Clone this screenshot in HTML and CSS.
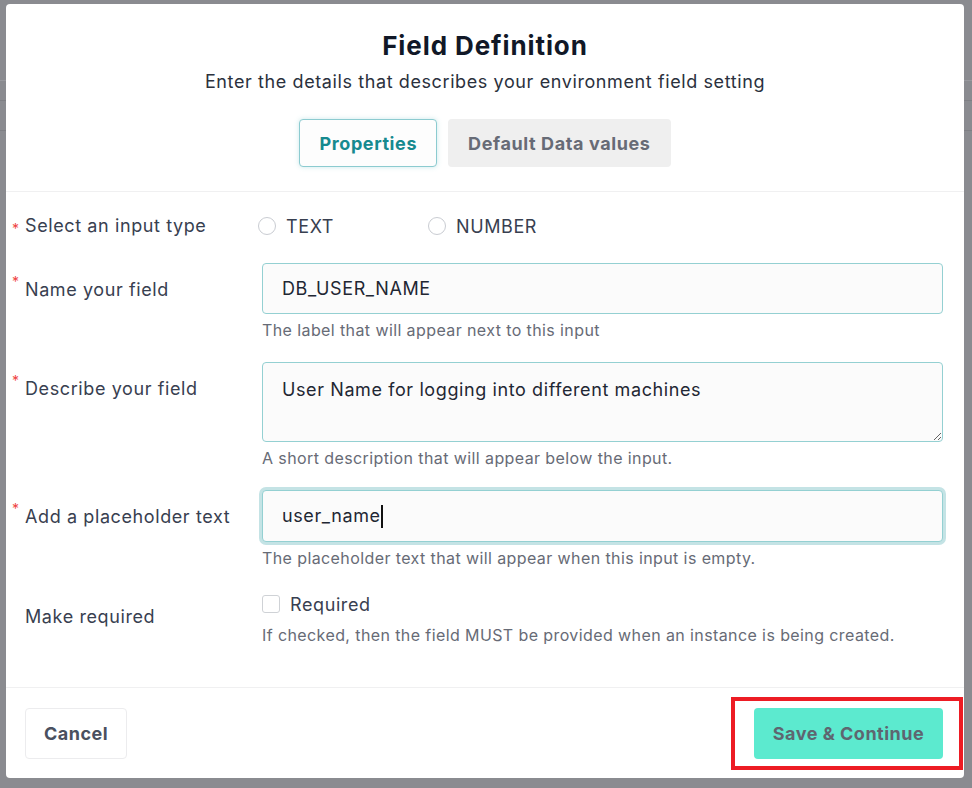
FILE: index.html
```html
<!DOCTYPE html>
<html lang="en">
<head>
<meta charset="utf-8">
<title>Field Definition</title>
<link rel="stylesheet" href="styles.css">
</head>
<body>
<div class="modal">
  <header class="modal-head">
    <h1 class="title">Field Definition</h1>
    <p class="subtitle">Enter the details that describes your environment field setting</p>
    <div class="tabs">
      <button class="tab tab-active">Properties</button>
      <button class="tab tab-idle">Default Data values</button>
    </div>
  </header>

  <section class="modal-body">
    <div class="row row-center">
      <div class="label label-center"><span class="req req-mid">*</span>Select an input type</div>
      <div class="radios">
        <label class="radio"><span class="circle"></span>TEXT</label>
        <label class="radio"><span class="circle"></span>NUMBER</label>
      </div>
    </div>

    <div class="row">
      <div class="label"><span class="req">*</span>Name your field</div>
      <div class="field">
        <input class="input" type="text" value="DB_USER_NAME">
        <div class="help">The label that will appear next to this input</div>
      </div>
    </div>

    <div class="row">
      <div class="label"><span class="req">*</span>Describe your field</div>
      <div class="field">
        <textarea class="input textarea">User Name for logging into different machines</textarea>
        <div class="help">A short description that will appear below the input.</div>
      </div>
    </div>

    <div class="row">
      <div class="label"><span class="req">*</span>Add a placeholder text</div>
      <div class="field">
        <div class="input input-focus">user_name<span class="caret"></span></div>
        <div class="help">The placeholder text that will appear when this input is empty.</div>
      </div>
    </div>

    <div class="row">
      <div class="label"><span class="req req-none"></span>Make required</div>
      <div class="field">
        <label class="check"><span class="box"></span>Required</label>
        <div class="help help-check">If checked, then the field MUST be provided when an instance is being created.</div>
      </div>
    </div>
  </section>

  <footer class="modal-foot">
    <button class="btn btn-cancel">Cancel</button>
    <button class="btn btn-save">Save &amp; Continue</button>
    <span class="annot"></span>
  </footer>
</div>
</body>
</html>
```

FILE: styles.css
```css
* { box-sizing: border-box; }

html, body { margin: 0; padding: 0; }

body {
  width: 972px;
  height: 788px;
  overflow: hidden;
  padding-top: 4px;
  font-family: Inter, "Noto Sans", sans-serif;
  background:
    linear-gradient(#98999e, #98999e) 0 80px / 100% 1px no-repeat,
    linear-gradient(#7e7f84, #7e7f84) 0 100px / 100% 1px no-repeat,
    linear-gradient(#7e7f84, #7e7f84) 0 130px / 100% 1px no-repeat,
    #8a8b90;
}

.modal {
  width: 958px;
  margin-left: 6px;
  background: #fff;
  border-radius: 4px;
  position: relative;
}

.modal-head {
  padding: 26px 0 24px;
  text-align: center;
  border-bottom: 1px solid #f0f0f1;
}

.title {
  margin: 0;
  font-size: 26px;
  line-height: 32px;
  font-weight: 700;
  letter-spacing: 0.9px;
  color: #111827;
}

.subtitle {
  margin: 8px 0 0;
  font-size: 18px;
  line-height: 24px;
  letter-spacing: 0.6px;
  color: #2b313d;
}

.tabs {
  margin-top: 25px;
  display: flex;
  justify-content: center;
  gap: 11px;
}

.tab {
  height: 48px;
  padding: 0 19px;
  font-family: inherit;
  font-size: 18px;
  font-weight: 700;
  letter-spacing: 0.6px;
  border-radius: 4px;
  border: 1px solid transparent;
}

.tab-active {
  background: #fdfdfd;
  border-color: #8ccbd0;
  color: #168a8f;
  box-shadow: 0 0 5px rgba(140, 203, 208, 0.45);
}

.tab-idle {
  background: #efefef;
  color: #676b76;
}

.modal-body {
  padding: 22px 21px 42px 19px;
  display: flex;
  flex-direction: column;
  gap: 22px;
}

.row {
  display: grid;
  grid-template-columns: 237px 1fr;
}

.row-center {
  align-items: center;
  margin-bottom: 3px;
}

.label {
  display: flex;
  align-items: flex-start;
  padding-top: 15px;
  font-size: 18px;
  line-height: 24px;
  letter-spacing: 0.6px;
  color: #384050;
  margin-left: -14px;
}

.label-center {
  padding-top: 0;
  align-items: center;
}

.req {
  width: 14px;
  flex: none;
  padding-left: 1px;
  margin-top: -3px;
  font-size: 14px;
  line-height: 14px;
  letter-spacing: 0;
  color: #ef4444;
}

.req-mid {
  margin-top: 6px;
}

.radios {
  display: flex;
  margin-left: -4px;
  height: 24px;
}

.radio {
  width: 170px;
  display: flex;
  align-items: center;
  gap: 10px;
  font-size: 18px;
  letter-spacing: 0.6px;
  color: #384050;
}

.circle {
  width: 18px;
  height: 18px;
  border-radius: 50%;
  border: 1px solid #c9ccd2;
  background: #fff;
}

.field {
  display: flex;
  flex-direction: column;
}

.input {
  display: block;
  width: 100%;
  height: 51px;
  margin: 0;
  padding: 0 19px;
  font-family: inherit;
  font-size: 18px;
  line-height: 24px;
  letter-spacing: 0.6px;
  color: #1f2733;
  background: #fbfbfb;
  border: 1px solid #94d0d2;
  border-radius: 4px;
  outline: none;
}

.textarea {
  height: 80px;
  padding-top: 15px;
  resize: vertical;
}

.input-focus {
  display: flex;
  align-items: center;
  height: 52px;
  box-shadow: 0 0 0 3px #c4e3e5;
}

.caret {
  display: inline-block;
  width: 2px;
  height: 23px;
  background: #111;
  margin-left: 0;
}

.help {
  margin-top: 6px;
  font-size: 16px;
  line-height: 20px;
  letter-spacing: 0.4px;
  color: #676b76;
}

.check {
  display: flex;
  align-items: center;
  gap: 10px;
  height: 28px;
  font-size: 18px;
  letter-spacing: 0.6px;
  color: #384050;
}

.box {
  width: 18px;
  height: 18px;
  border: 1px solid #cfd2d6;
  border-radius: 3px;
  background: #fff;
}

.help-check {
  margin-top: 7px;
}

.modal-foot {
  display: flex;
  justify-content: space-between;
  padding: 20px 21px 19px 19px;
  border-top: 1px solid #f0f0f1;
}

.btn {
  height: 51px;
  font-family: inherit;
  font-size: 18px;
  font-weight: 700;
  letter-spacing: 0.5px;
  border-radius: 4px;
  border: 1px solid transparent;
}

.btn-cancel {
  width: 102px;
  background: #fff;
  border-color: #ececee;
  color: #4a5060;
}

.btn-save {
  width: 189px;
  background: #5ceacf;
  color: #5e6670;
}

.annot {
  position: absolute;
  left: 725px;
  top: 693px;
  width: 232px;
  height: 73px;
  border: 4px solid #ed1c24;
  pointer-events: none;
}
```
